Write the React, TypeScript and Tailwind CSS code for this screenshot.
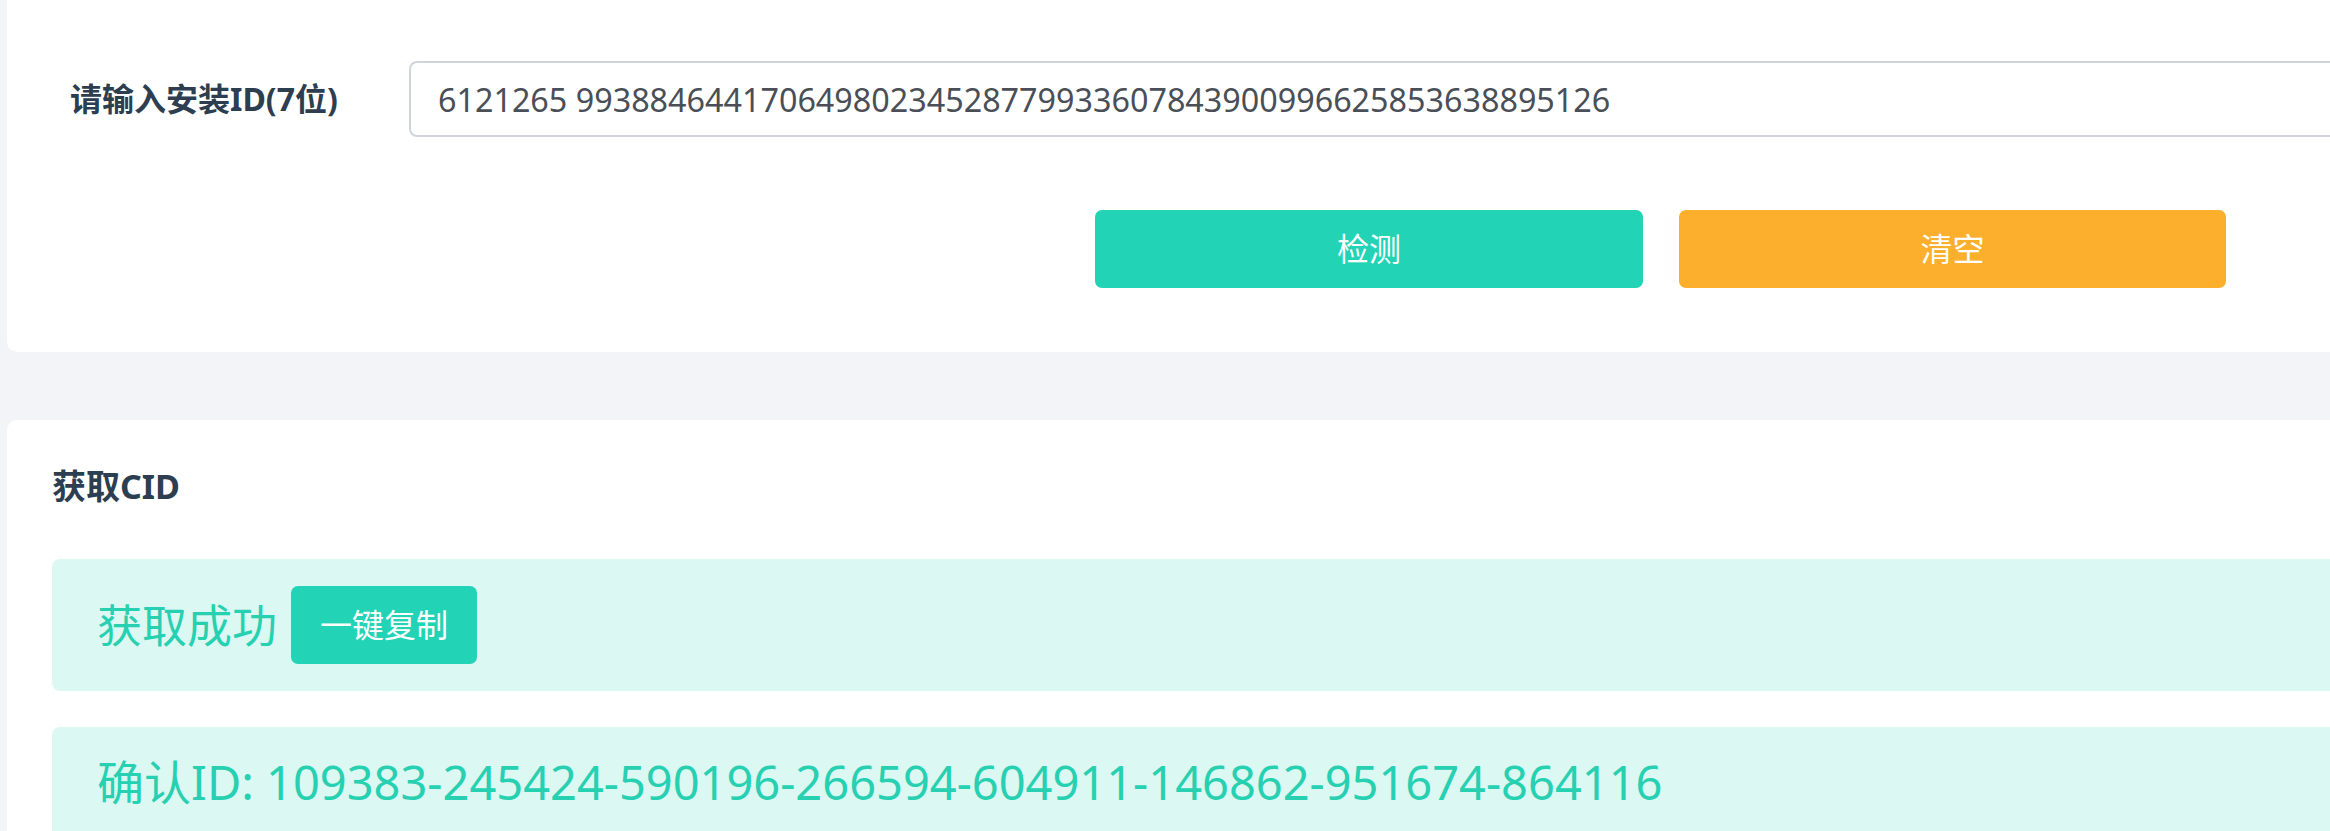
import React from "react";

const FONT = { fontFamily: '"Noto Sans", "Noto Sans CJK SC", sans-serif' };

export default function App() {
  return (
    <div className="w-[2330px] h-[831px] overflow-hidden bg-[#f2f4f8]" style={FONT}>
      <div className="w-[2520px] pl-[7px]">
        {/* Card 1 */}
        <div className="bg-white rounded-b-[10px] pt-[61px] pb-[64px] pl-[63px]">
          <div className="flex items-center">
            <label className="w-[339px] shrink-0 text-[32px] font-bold leading-[76px] text-[#2c3e50]">
              请输入安装ID(7位)
            </label>
            <input
              readOnly
              value="6121265 99388464417064980234528779933607843900996625853638895126"
              className="flex-1 min-w-0 h-[76px] border-2 border-[#d0d4da] rounded-[8px] pl-[27px] text-[32.3px] text-[#4a4f57] outline-none bg-white"
            />
          </div>
          <div className="flex gap-[36px] mt-[73px] pl-[1025px]">
            <button className="w-[548px] h-[78px] rounded-[7px] bg-[#23d3b5] text-white text-[32px]">
              检测
            </button>
            <button className="w-[547px] h-[78px] rounded-[7px] bg-[#fbaf2c] text-white text-[32px]">
              清空
            </button>
          </div>
        </div>

        {/* Card 2 */}
        <div className="mt-[68px] bg-white rounded-t-[10px] pt-[41px] pl-[45px] h-[500px]">
          <h2 className="text-[34px] font-bold leading-[50px] text-[#2c3e50]">获取CID</h2>
          <div className="mt-[48px] h-[132px] rounded-[8px] bg-[#dcf8f2] flex items-center pl-[45px] gap-[14px]">
            <span className="text-[45px] leading-none text-[#26d0b1]">获取成功</span>
            <button className="h-[78px] px-[29px] rounded-[7px] bg-[#23d3b5] text-white text-[32px]">
              一键复制
            </button>
          </div>
          <div className="mt-[36px] h-[132px] rounded-[8px] bg-[#dcf8f2] pt-[19px] pl-[45px]">
            <span className="text-[47px] leading-[72px] text-[#26d0b1]">
              确认ID: 109383-245424-590196-266594-604911-146862-951674-864116
            </span>
          </div>
        </div>
      </div>
    </div>
  );
}
